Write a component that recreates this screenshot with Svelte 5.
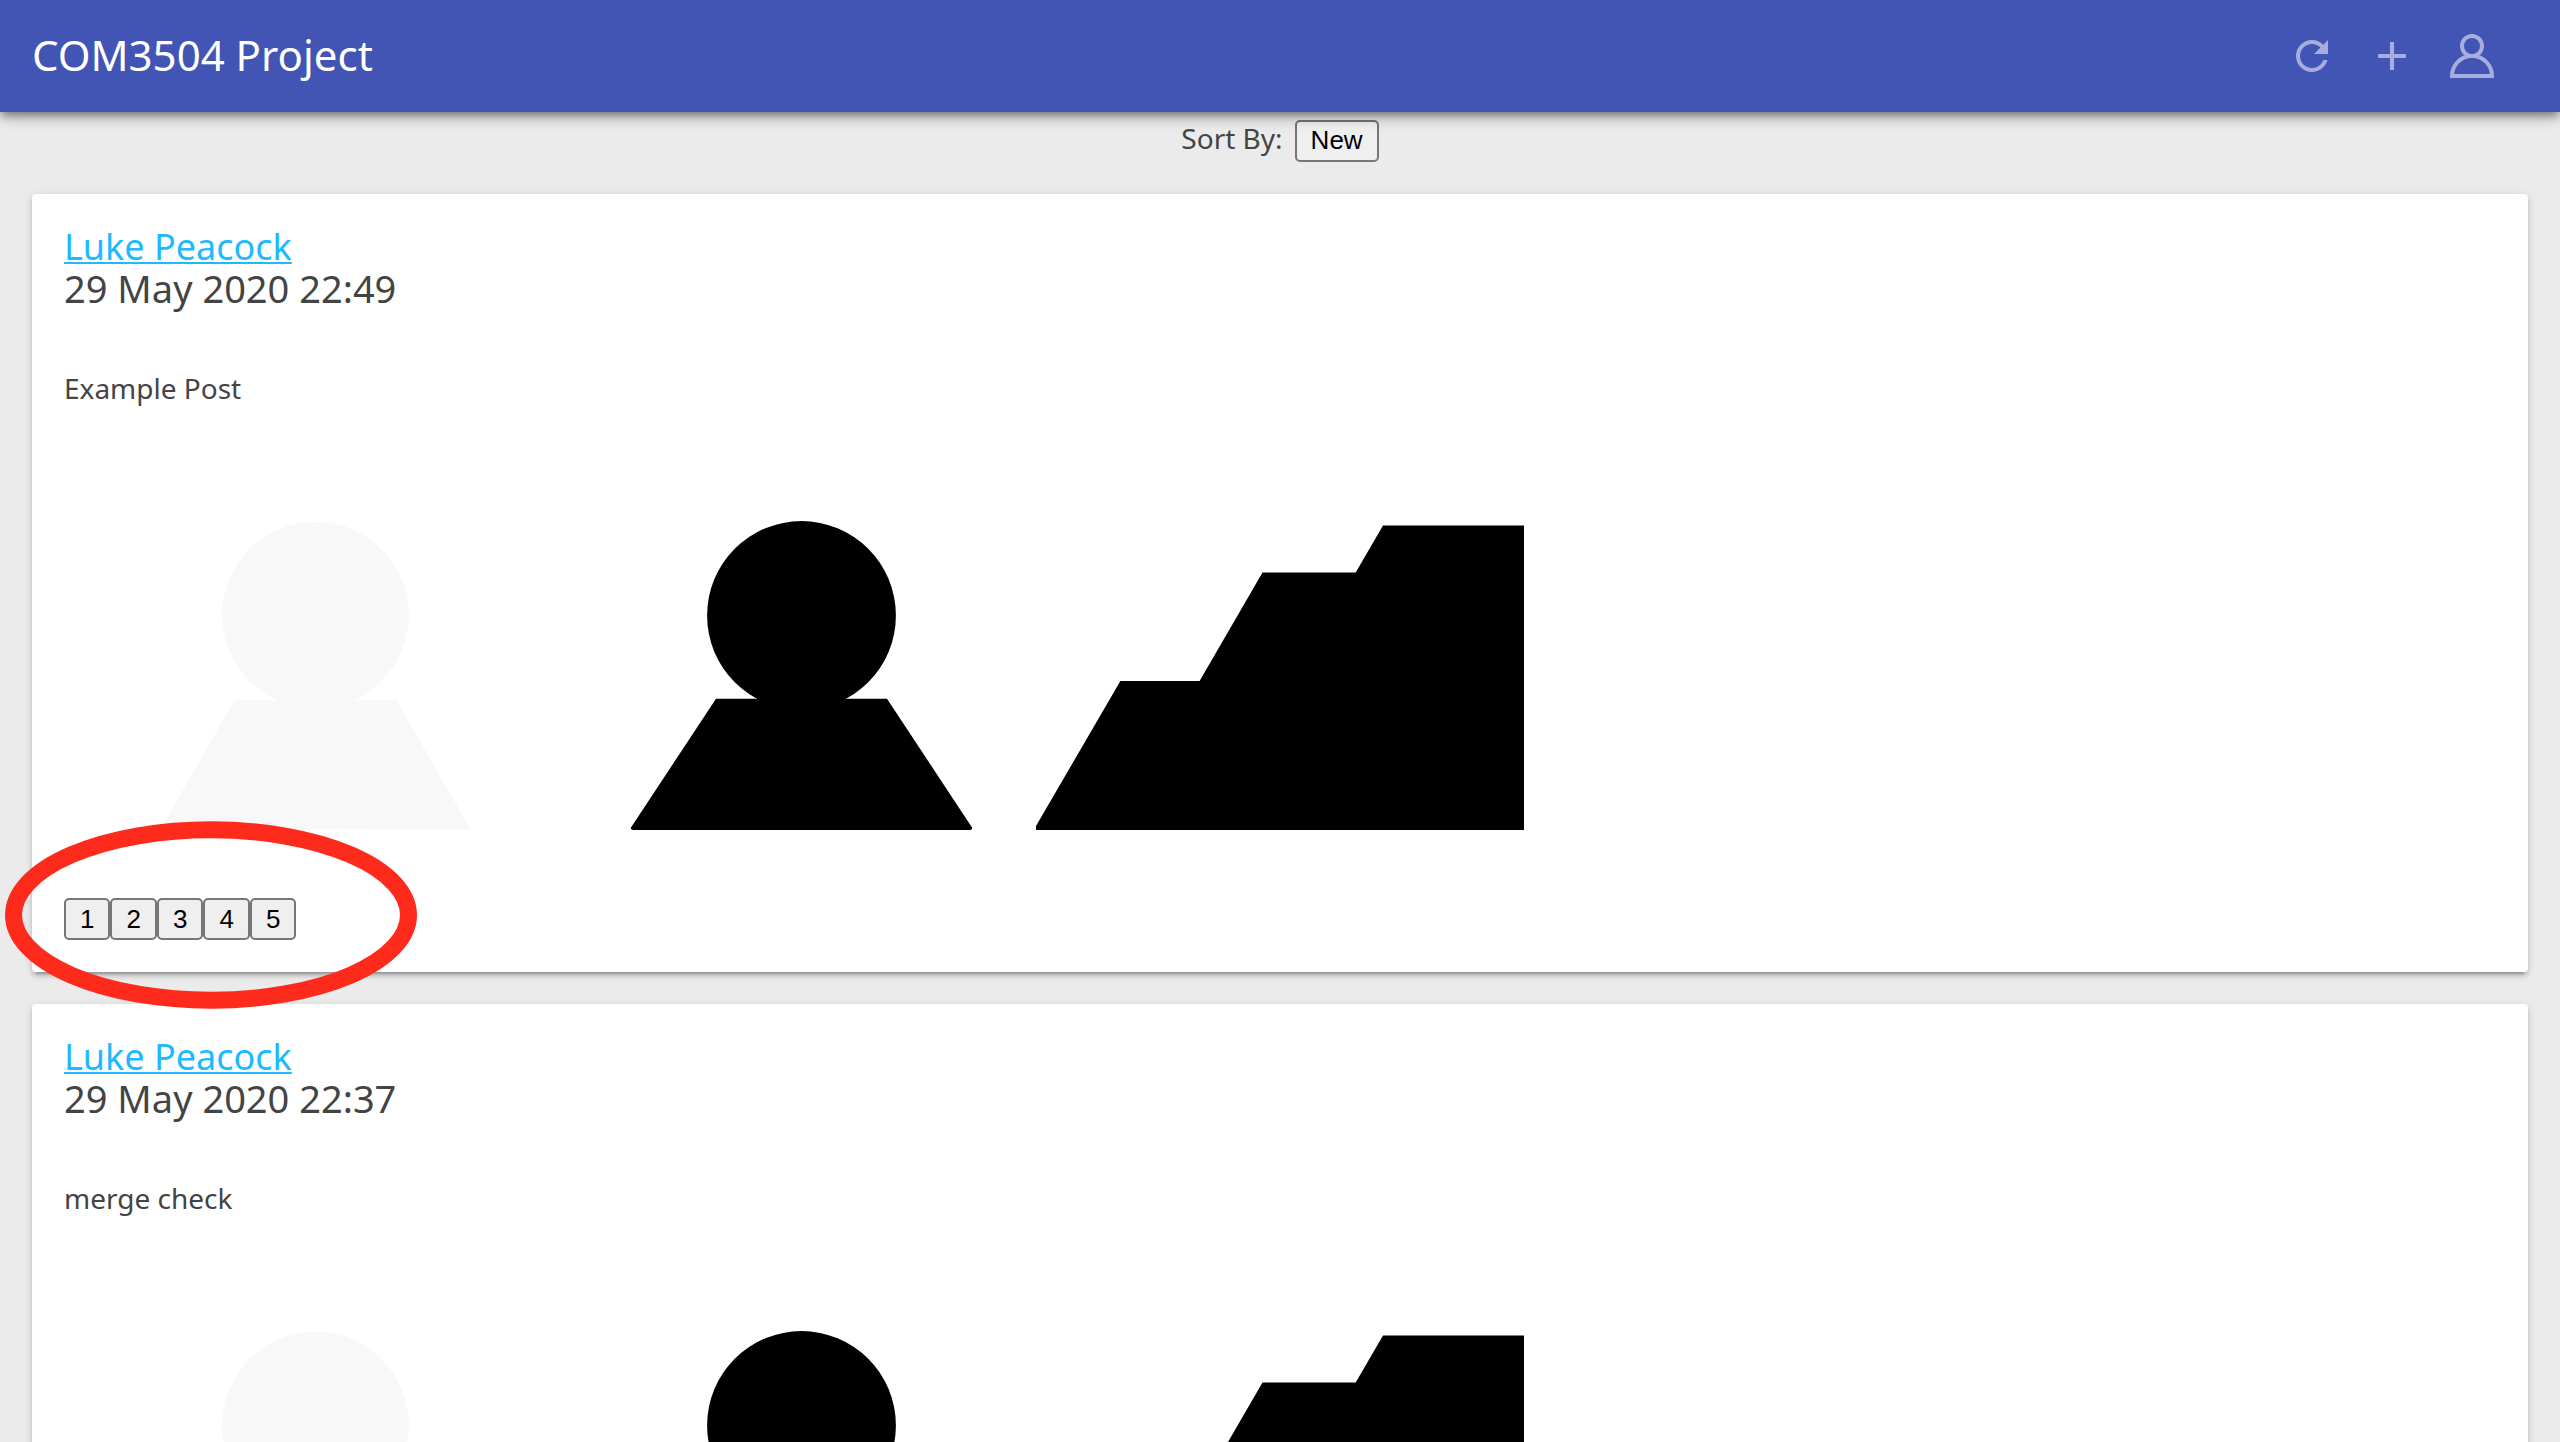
<script>
  const posts = $state([
    { id: 1, author: 'Luke Peacock', date: '29 May 2020 22:49', text: 'Example Post', ratings: [1, 2, 3, 4, 5] },
    { id: 2, author: 'Luke Peacock', date: '29 May 2020 22:37', text: 'merge check', ratings: [] }
  ]);
</script>

<div class="layout">
  <header>
    <h1>COM3504 Project</h1>
    <nav>
      <button class="icon" aria-label="Refresh">
        <svg viewBox="0 0 24 24"><path fill="currentColor" d="M17.65 6.35C16.2 4.9 14.21 4 12 4c-4.42 0-7.99 3.58-7.99 8s3.57 8 7.99 8c3.73 0 6.84-2.55 7.73-6h-2.08c-.82 2.33-3.04 4-5.65 4-3.31 0-6-2.69-6-6s2.69-6 6-6c1.66 0 3.14.69 4.22 1.78L13 11h7V4l-2.35 2.35z" /></svg>
      </button>
      <button class="icon" aria-label="New post">
        <svg viewBox="0 0 24 24"><path fill="currentColor" d="M19 13h-6v6h-2v-6H5v-2h6V5h2v6h6v2z" /></svg>
      </button>
      <button class="icon" aria-label="Profile">
        <svg viewBox="0 0 48 48" fill="none" stroke="currentColor" stroke-width="4">
          <path d="M24 4a10 10 0 1 0 0 20a10 10 0 1 0 0-20zM24 24A20 20 0 0 0 4 44H44A20 20 0 0 0 24 24z" />
        </svg>
      </button>
    </nav>
  </header>

  <main>
    <div class="sort">
      <label for="sort">Sort By:</label>
      <button id="sort" class="plain">New</button>
    </div>

    <div class="posts">
      {#each posts as post (post.id)}
        <article>
          <a class="author" href="#profile">{post.author}</a>
          <time>{post.date}</time>
          <p>{post.text}</p>
          <div class="gallery">
            <svg width="520" height="400" viewBox="0 0 520 400" fill="#f8f8f8" role="img" aria-label="Pale figure">
              <circle cx="251.5" cy="185" r="93.3" />
              <path d="M170.3 270.5H332.7L407 400H96z" />
            </svg>
            <svg width="436" height="400" viewBox="0 0 436 400" role="img" aria-label="Dark figure">
              <circle cx="217.5" cy="185.5" r="94.4" />
              <path d="M132 268.7H303L388 397.5Q388.500 400 386 400H49Q46.500 400 47 397.5z" />
            </svg>
            <svg width="520" height="400" viewBox="0 0 520 400" role="img" aria-label="Steps">
              <path d="M16 396L100.400 251H179.600L242.500 142.500H335.700L363 95.500H504V400H16z" />
            </svg>
          </div>
          {#if post.ratings.length}
            <div class="ratings">
              {#each post.ratings as rating}
                <button class="plain">{rating}</button>
              {/each}
              <svg class="ring" width="412" height="188" viewBox="0 0 412 188" aria-hidden="true">
                <ellipse cx="206" cy="94" rx="197.5" ry="85.2" fill="none" stroke="#fe2b1d" stroke-width="17" />
              </svg>
            </div>
          {/if}
        </article>
      {/each}
    </div>
  </main>
</div>

<style>
  :global(body) {
    margin: 0;
  }
  .layout {
    display: flex;
    flex-direction: column;
    height: 100vh;
    background: #ebebeb;
    color: #444;
    font-family: 'Noto Sans', 'Open Sans', sans-serif;
    font-size: 28px;
  }
  header {
    position: relative;
    z-index: 2;
    flex: none;
    display: flex;
    align-items: center;
    justify-content: space-between;
    box-sizing: border-box;
    height: 112px;
    padding: 0 64px 0 32px;
    background: #4254b4;
    color: #fff;
    box-shadow:
      0 8px 10px rgba(0, 0, 0, 0.14),
      0 2px 20px rgba(0, 0, 0, 0.12),
      0 4px 8px -2px rgba(0, 0, 0, 0.4);
  }
  h1 {
    margin: 0;
    padding-bottom: 2px;
    font-size: 42px;
    line-height: 56px;
    font-weight: 400;
  }
  nav {
    display: flex;
    gap: 32px;
  }
  .icon {
    width: 48px;
    height: 48px;
    padding: 0;
    border: 0;
    background: none;
    color: #a7aedd;
  }
  .icon svg {
    display: block;
  }
  main {
    flex: 1;
    min-height: 0;
    overflow-y: auto;
    scrollbar-width: none;
  }
  .sort {
    display: flex;
    justify-content: center;
    align-items: baseline;
    gap: 12px;
    height: 42px;
    padding: 6px 0 34px;
    line-height: 40px;
  }
  .plain {
    box-sizing: border-box;
    min-width: 46px;
    height: 42px;
    padding: 0 14px;
    border: 2px solid #767676;
    border-radius: 5px;
    background: #efefef;
    color: #000;
    font: 26px 'Liberation Sans', Arial, sans-serif;
  }
  .posts {
    display: flex;
    flex-direction: column;
    gap: 32px;
    padding: 0 32px 32px;
  }
  article {
    display: flex;
    flex-direction: column;
    align-items: flex-start;
    padding: 32px;
    border-radius: 4px;
    background: #fff;
    box-shadow:
      0 4px 4px rgba(0, 0, 0, 0.14),
      0 6px 2px -4px rgba(0, 0, 0, 0.2),
      0 2px 10px rgba(0, 0, 0, 0.12);
  }
  .author {
    color: #20b9ff;
    font-size: 36px;
    line-height: 42px;
    text-decoration-thickness: 2px;
    text-underline-offset: 2px;
    text-decoration-skip-ink: none;
  }
  time {
    font-size: 38px;
    line-height: 40px;
  }
  p {
    margin: 60px 0 22px;
    line-height: 40px;
  }
  .gallery {
    display: flex;
    margin-bottom: 68px;
  }
  .ratings {
    position: relative;
    display: flex;
  }
  .ring {
    position: absolute;
    left: -59px;
    top: -77px;
    pointer-events: none;
  }
</style>
